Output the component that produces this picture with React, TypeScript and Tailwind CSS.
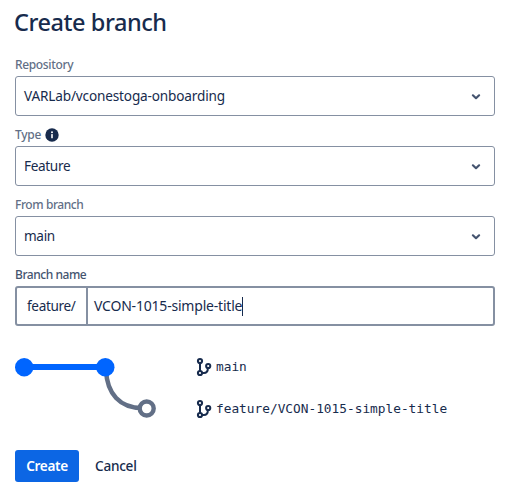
import React from "react";

const SANS = "font-['Noto_Sans','Open_Sans',sans-serif]";

function Chevron() {
  return (
    <svg width="10" height="8" viewBox="0 0 10 8" className="mt-px mr-[13px]" fill="none">
      <path d="M1.9 2.3 L5 5.2 L8.1 2.3" stroke="#44546F" strokeWidth="2.2" strokeLinecap="round" strokeLinejoin="round" />
    </svg>
  );
}

function Label({ text, className, children }: { text: string; className: string; children?: React.ReactNode }) {
  return (
    <div className="flex h-[22px] items-center text-[12px] leading-4 font-medium">
      <span className={className}>{text}</span>
      {children}
    </div>
  );
}

function Select({ value, className }: { value: string; className: string }) {
  return (
    <div className="mb-2 flex h-10 items-center justify-between rounded-[3px] border border-[#8590A2] pl-2 text-[13.6px] leading-5">
      <span className={className}>{value}</span>
      <Chevron />
    </div>
  );
}

function BranchIcon() {
  return (
    <svg width="16" height="20" viewBox="0 0 16 20" fill="none" stroke="#172B4D" strokeWidth="2">
      <circle cx="4" cy="4" r="2.1" />
      <circle cx="4" cy="16" r="2.1" />
      <circle cx="12.2" cy="9" r="2.1" />
      <path d="M4 6V14M6 16h1.8c2.6 0 4.1-1.4 4.1-5" />
    </svg>
  );
}

function BranchRow({ name }: { name: string }) {
  return (
    <div className="flex h-[42px] items-center gap-1">
      <BranchIcon />
      <span className="font-['DejaVu_Sans_Mono',monospace] text-[12.8px] leading-5 whitespace-nowrap">{name}</span>
    </div>
  );
}

export default function App() {
  return (
    <main className={`h-[491px] w-[509px] overflow-hidden bg-white pr-[14px] pl-[15px] text-[#172B4D] ${SANS}`}>
      <h1 className="-ml-px flex h-[54px] items-center pb-[10px] text-[23.5px] leading-7 font-medium tracking-[-0.45px]">Create branch</h1>

      <Label text="Repository" className="text-[#626F86] tracking-[-0.35px]" />
      <Select value="VARLab/vconestoga-onboarding" className="tracking-[-0.16px]" />

      <Label text="Type" className="text-[#626F86] tracking-[-0.3px]">
        <svg width="14" height="14" viewBox="0 0 14 14" className="-mt-px ml-[4px]">
          <circle cx="7" cy="7" r="6.7" fill="#172B4D" />
          <circle cx="7" cy="4.2" r="1" fill="#fff" />
          <rect x="6.2" y="6" width="1.6" height="4.3" rx=".6" fill="#fff" />
        </svg>
      </Label>
      <Select value="Feature" className="tracking-[-0.35px]" />

      <Label text="From branch" className="text-[#626F86] tracking-[-0.42px]" />
      <Select value="main" className="tracking-[-0.35px]" />

      <Label text="Branch name" className="text-[#44546F] tracking-[-0.45px]" />
      <div className="flex h-10 rounded-[3px] border-2 border-[#8590A2] text-[14px] leading-5">
        <div className="flex w-[71px] items-center border-r-2 border-[#8590A2] pl-[10px]">
          <span className="text-[13.6px] tracking-[-0.35px]">feature/</span>
        </div>
        <div className="flex items-center pl-[6px]">
          <span className="tracking-[-0.2px]">VCON-1015-simple-title</span>
          <span className="h-[19px] w-px bg-[#172B4D]" />
        </div>
      </div>

      <div className="flex h-[124px] pt-5">
        <svg width="181" height="84" viewBox="15 346 181 84" fill="none" className="shrink-0">
          <path d="M106 370C107 394 120 408 142 408" stroke="#626F86" strokeWidth="4.5" />
          <circle cx="146.7" cy="408.5" r="7" fill="#fff" stroke="#626F86" strokeWidth="4.4" />
          <path d="M24 367H105" stroke="#0065FF" strokeWidth="6" />
          <circle cx="24.2" cy="367.2" r="9.2" fill="#0065FF" />
          <circle cx="105.3" cy="367.2" r="9.2" fill="#0065FF" />
        </svg>
        <div className="flex flex-col">
          <BranchRow name="main" />
          <BranchRow name="feature/VCON-1015-simple-title" />
        </div>
      </div>

      <div className="flex h-8 items-center text-[13.6px] leading-5">
        <button className="flex h-8 w-16 items-center justify-center rounded-[3px] bg-[#0C66E4] font-semibold text-white">
          <span className="tracking-[-0.35px]">Create</span>
        </button>
        <button className="ml-4 font-medium tracking-[-0.25px]">Cancel</button>
      </div>
    </main>
  );
}
